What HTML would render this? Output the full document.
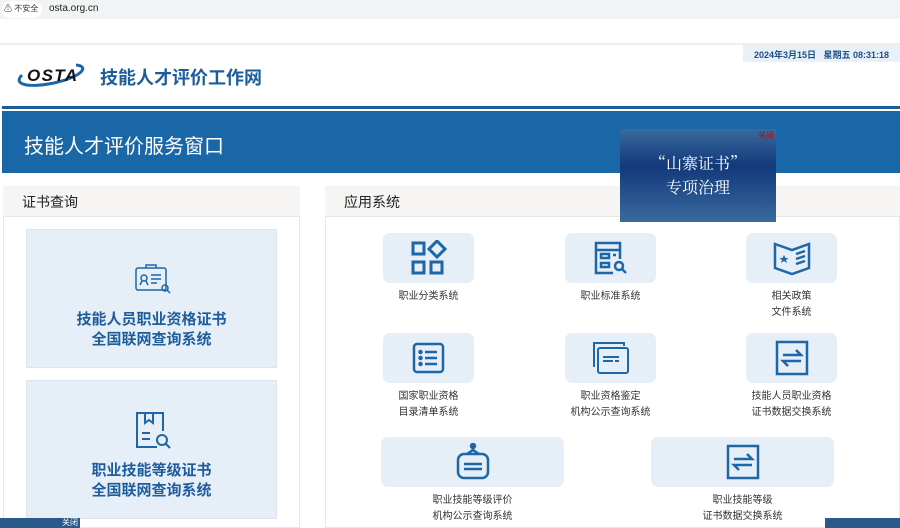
<!DOCTYPE html>
<html><head><meta charset="utf-8"><style>
*{margin:0;padding:0;box-sizing:border-box}
body{width:900px;height:528px;overflow:hidden;background:#fff;font-family:"Liberation Sans","Noto Sans CJK SC",sans-serif;position:relative}
.a{position:absolute}
.ib{position:absolute;background:#e6eef7;border-radius:7px;display:flex;align-items:center;justify-content:center}
.lb{position:absolute;font-size:10px;color:#333;text-align:center;line-height:16px}
.card{position:absolute;left:26px;width:251px;background:#e6eef7;border:1px solid #dde4ec;text-align:center;color:#1d5d9c;font-size:15px;font-weight:bold;line-height:20px}
</style></head><body>
<div class="a" style="left:0;top:0;width:900px;height:19px;background:#f1f3f4"></div>
<div class="a" style="left:2px;top:1px;width:40px;height:17px;background:#fff;border-radius:9px"></div>
<div class="a" style="left:4px;top:3px;font-size:8px;color:#333">⚠ 不安全</div>
<div class="a" style="left:49px;top:3px;font-size:10px;color:#222">osta.org.cn</div>
<div class="a" style="left:0;top:43px;width:900px;height:2px;background:#eee"></div>
<div class="a" style="left:743px;top:45px;width:157px;height:17px;background:#e8f0f8;font-size:9px;font-weight:bold;color:#1d4e85;padding:3px 0 0 11px;white-space:nowrap">2024年3月15日&nbsp;&nbsp;&nbsp;星期五 08:31:18</div>
<svg class="a" style="left:14px;top:60px" width="75" height="30"><path d="M62 5C75 6 70 16 40 23 15 28 -2 25 8 15" fill="none" stroke="#1d67a8" stroke-width="3"/><text x="13" y="21" font-size="17" font-weight="bold" font-style="italic" fill="#111" font-family="Liberation Sans" textLength="50">OSTA</text></svg>
<div class="a" style="left:100px;top:64px;font-size:18px;font-weight:bold;color:#1d5d9c">技能人才评价工作网</div>
<div class="a" style="left:2px;top:106px;width:898px;height:3px;background:#1d5d9c"></div>
<div class="a" style="left:2px;top:111px;width:898px;height:62px;background:#1a67a8"></div>
<div class="a" style="left:24px;top:130px;font-size:20px;color:#fff">技能人才评价服务窗口</div>
<div class="a" style="left:3px;top:186px;width:297px;height:342px;border:1px solid #e8e8e8"></div>
<div class="a" style="left:3px;top:186px;width:297px;height:31px;background:#f7f5f3;border-bottom:1px solid #e6e6e6;font-size:14px;color:#222;padding:6px 0 0 19px">证书查询</div>
<div class="card" style="top:229px;height:139px;padding-top:80px">技能人员职业资格证书<br>全国联网查询系统
<svg class="a" style="left:107px;top:34px" width="38" height="30" fill="none" stroke="#1d67a8" stroke-width="1.5"><rect x="2" y="4" width="30" height="22" rx="2"/><path d="M12 4V1h10v3"/><circle cx="10" cy="14" r="3"/><path d="M8 17l-2 4M12 17l2 4M17 11h10M17 15h10M17 19h6"/><circle cx="31" cy="24" r="3"/><path d="M33 26l3 3"/></svg></div>
<div class="card" style="top:380px;height:139px;padding-top:80px">职业技能等级证书<br>全国联网查询系统
<svg class="a" style="left:106px;top:30px" width="40" height="40" fill="none" stroke="#1d67a8" stroke-width="2"><path d="M24 36H4V2h26v18"/><path d="M12 2v10l4-3 4 3V2M9 22h8M9 28h8"/><circle cx="29" cy="29" r="5"/><path d="M33 33l4 4"/></svg></div>
<div class="a" style="left:325px;top:186px;width:575px;height:342px;border:1px solid #e8e8e8"></div>
<div class="a" style="left:325px;top:186px;width:575px;height:31px;background:#f7f5f3;border-bottom:1px solid #e6e6e6;font-size:14px;color:#222;padding:6px 0 0 19px">应用系统</div>

<div class="ib" style="left:383px;top:233px;width:91px;height:50px"><svg width="36" height="36" fill="none" stroke="#1d67a8" stroke-width="3"><rect x="2" y="3" width="11" height="11"/><path d="M26 1l8 8-8 8-8-8z"/><rect x="2" y="22" width="11" height="11"/><rect x="20" y="22" width="11" height="11"/></svg></div>
<div class="lb" style="left:378px;top:289px;width:101px">职业分类系统</div>
<div class="ib" style="left:565px;top:233px;width:91px;height:50px"><svg width="36" height="36" fill="none" stroke="#1d67a8" stroke-width="2.5"><path d="M20 33H3V3h24v16M3 10h24"/><rect x="8" y="14" width="8" height="4"/><rect x="8" y="23" width="8" height="4"/><path d="M20 15h3"/><circle cx="26" cy="26" r="4"/><path d="M29 29l4 4"/></svg></div>
<div class="lb" style="left:560px;top:289px;width:101px">职业标准系统</div>
<div class="ib" style="left:746px;top:233px;width:91px;height:50px"><svg width="40" height="36" fill="none" stroke="#1d67a8" stroke-width="2.5"><path d="M3 4l17 6 17-6v24l-17 6-17-6z"/><path d="M24 14l9-3M24 19l9-3M24 24l9-3"/><path d="M12 15l1.5 3h3l-2.5 2 1 3-3-2-3 2 1-3-2.5-2h3z" fill="#1d67a8" stroke="none"/></svg></div>
<div class="lb" style="left:741px;top:289px;width:101px">相关政策<br>文件系统</div>

<div class="ib" style="left:383px;top:333px;width:91px;height:50px"><svg width="34" height="34" fill="none" stroke="#1d67a8" stroke-width="2.5"><rect x="2" y="3" width="29" height="28" rx="3"/><path d="M13 11h12M13 17h12M13 23h12"/><circle cx="8.5" cy="11" r="1" fill="#1d67a8"/><circle cx="8.5" cy="17" r="1" fill="#1d67a8"/><circle cx="8.5" cy="23" r="1" fill="#1d67a8"/></svg></div>
<div class="lb" style="left:373px;top:389px;width:111px">国家职业资格<br>目录清单系统</div>
<div class="ib" style="left:565px;top:333px;width:91px;height:50px"><svg width="40" height="36" fill="none" stroke="#1d67a8" stroke-width="2"><path d="M3 27V3h30v3"/><rect x="7" y="8" width="30" height="25" rx="2"/><path d="M12 17h16M12 21h10M24 21h4"/></svg></div>
<div class="lb" style="left:550px;top:389px;width:121px">职业资格鉴定<br>机构公示查询系统</div>
<div class="ib" style="left:746px;top:333px;width:91px;height:50px"><svg width="34" height="36" fill="none" stroke="#1d67a8" stroke-width="2.5"><rect x="2" y="2" width="30" height="32"/><path d="M8 15h18l-5-5M26 21H8l5 5"/></svg></div>
<div class="lb" style="left:731px;top:389px;width:121px">技能人员职业资格<br>证书数据交换系统</div>

<div class="ib" style="left:381px;top:437px;width:183px;height:50px"><svg width="36" height="38" fill="none" stroke="#1d67a8" stroke-width="2.5"><path d="M18 2v6"/><circle cx="18" cy="3" r="2"/><path d="M12 11l6-4 6 4"/><rect x="3" y="11" width="30" height="24" rx="6"/><path d="M9 21h18M9 26h18"/></svg></div>
<div class="lb" style="left:412px;top:493px;width:121px">职业技能等级评价<br>机构公示查询系统</div>
<div class="ib" style="left:651px;top:437px;width:183px;height:50px"><svg width="34" height="36" fill="none" stroke="#1d67a8" stroke-width="2.5"><rect x="2" y="2" width="30" height="32"/><path d="M8 15h18l-5-5M26 21H8l5 5"/></svg></div>
<div class="lb" style="left:682px;top:493px;width:121px">职业技能等级<br>证书数据交换系统</div>

<div class="a" style="left:620px;top:129px;width:156px;height:93px;background:linear-gradient(#3a6a9e,#12397a 40%,#3a6a9e);color:#fff;font-family:'Noto Serif CJK SC',serif;font-size:16px;text-align:center;line-height:24px;padding-top:22px">“山寨证书”<br>专项治理</div>
<div class="a" style="left:758px;top:130px;font-size:8px;color:#c00">关闭</div>
<div class="a" style="left:0;top:518px;width:80px;height:10px;background:#2a5a8c"></div>
<div class="a" style="left:62px;top:518px;font-size:8px;color:#fff;line-height:10px">关闭</div>
<div class="a" style="left:825px;top:518px;width:75px;height:10px;background:#2a5a8c"></div>
</body></html>
